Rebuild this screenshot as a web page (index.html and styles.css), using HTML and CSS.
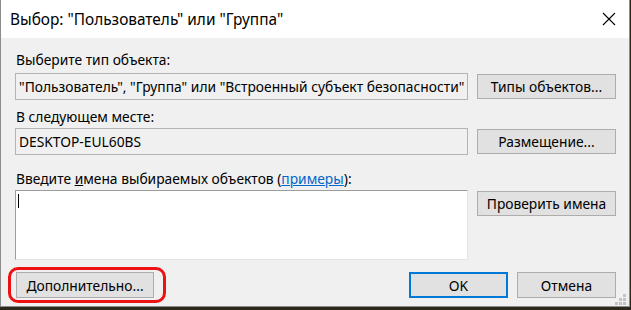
FILE: index.html
```html
<!DOCTYPE html>
<html lang="ru">
    <head>
        <meta charset="UTF-8" />
        <title>Выбор: "Пользователь" или "Группа"</title>
        <link rel="stylesheet" href="styles.css">
    </head>
    <body>
        <div class="window">
            <div class="titlebar">
                <span class="title">Выбор: "Пользователь" или "Группа"</span>
                <svg class="close" width="14" height="14" viewBox="0 0 14 14">
                    <path d="M1 1 L13 13 M13 1 L1 13" stroke="#000" stroke-width="1.1" fill="none" />
                </svg>
            </div>

            <div class="content">
                <div class="label label-first">Выберите тип объекта:</div>
                <div class="row">
                    <div class="field">"Пользователь", "Группа" или "Встроенный субъект безопасности"</div>
                    <button class="btn">Типы объектов...</button>
                </div>

                <div class="label label-second">В следующем месте:</div>
                <div class="row">
                    <div class="field">DESKTOP-EUL60BS</div>
                    <button class="btn">Размещение...</button>
                </div>

                <div class="label label-third">Введите <u>и</u>мена выбираемых объектов (<a href="#">примеры</a>):</div>
                <div class="row row-top">
                    <div class="names"><span class="caret"></span></div>
                    <button class="btn btn-check">Проверить имена</button>
                </div>

                <div class="footer">
                    <div class="advanced">
                        <button class="btn btn-advanced">Дополнительно...</button>
                        <!-- red mark drawn round the button -->
                        <span class="highlight"></span>
                    </div>
                    <div class="actions">
                        <button class="btn btn-ok">OK</button>
                        <button class="btn btn-cancel">Отмена</button>
                    </div>
                </div>
            </div>

            <svg class="grip" width="12" height="12" viewBox="0 0 12 12">
                <rect x="8" y="0" width="3" height="3" fill="#c4c4c4" />
                <rect x="4" y="4" width="3" height="3" fill="#c4c4c4" />
                <rect x="8" y="4" width="3" height="3" fill="#c4c4c4" />
                <rect x="0" y="8" width="3" height="3" fill="#c4c4c4" />
                <rect x="4" y="8" width="3" height="3" fill="#c4c4c4" />
                <rect x="8" y="8" width="3" height="3" fill="#c4c4c4" />
            </svg>
        </div>
    </body>
</html>
```

FILE: styles.css
```css
body {
    margin: 0;
    background-color: #2e271c;
    font-family: "Noto Sans", "Liberation Sans", sans-serif;
    font-size: 13.8px;
    color: #000;
}

/* Dialog window */
.window {
    position: relative;
    width: 630px;
    height: 307px;
    box-sizing: border-box;
    background-color: #f0f0f0;
    border: 1px solid #8c8c8c;
    border-top: none;
}

.titlebar {
    height: 38px;
    background-color: #fff;
    display: flex;
    align-items: center;
    justify-content: space-between;
    padding: 0 13px 0 9px;
}

.title {
    font-size: 15.4px;
    padding-top: 1px;
}

.close {
    display: block;
}

.content {
    padding: 0 13px 0 14px;
}

/* Labels above the fields */
.label {
    height: 16px;
    line-height: 16px;
    padding-left: 1px;
}

.label-first {
    margin-top: 14px;
    margin-bottom: 5px;
}

.label-second {
    margin-top: 9px;
    margin-bottom: 3px;
}

.label-third {
    margin-top: 16px;
    margin-bottom: 3px;
}

.label a {
    color: #0066cc;
}

.row {
    display: flex;
    align-items: center;
    gap: 9px;
}

.row-top {
    align-items: flex-start;
}

.field {
    width: 453px;
    height: 27px;
    box-sizing: border-box;
    border: 1px solid #b4b4b4;
    padding: 0 3px;
    line-height: 25px;
    white-space: nowrap;
    overflow: hidden;
}

/* Name input area */
.names {
    width: 453px;
    height: 70px;
    box-sizing: border-box;
    background-color: #fff;
    border: 1px solid #e3e3e3;
    border-top-color: #9d9d9d;
    border-left-color: #9d9d9d;
    padding: 3px 2px;
}

.caret {
    display: block;
    width: 1px;
    height: 14px;
    background-color: #000;
}

/* Buttons */
.btn {
    width: 139px;
    height: 25px;
    box-sizing: border-box;
    background-color: #e1e1e1;
    border: 1px solid #adadad;
    font-family: inherit;
    font-size: 13.8px;
    color: #000;
    padding: 0;
    margin: 0;
}

.btn-check {
    margin-top: 1px;
}

.footer {
    display: flex;
    justify-content: space-between;
    margin-top: 12px;
}

.advanced {
    position: relative;
    padding-left: 1px;
}

.btn-advanced {
    width: 138px;
    height: 26px;
}

.highlight {
    position: absolute;
    left: -7px;
    top: -5px;
    width: 158px;
    height: 36px;
    box-sizing: border-box;
    border: 3px solid #ee1111;
    border-radius: 10px;
}

.actions {
    display: flex;
    gap: 9px;
}

.btn-ok {
    width: 99px;
    height: 26px;
    border: 2px solid #0078d7;
}

.btn-cancel {
    width: 99px;
    height: 26px;
}

.grip {
    position: absolute;
    right: 2px;
    bottom: 0;
}
```
